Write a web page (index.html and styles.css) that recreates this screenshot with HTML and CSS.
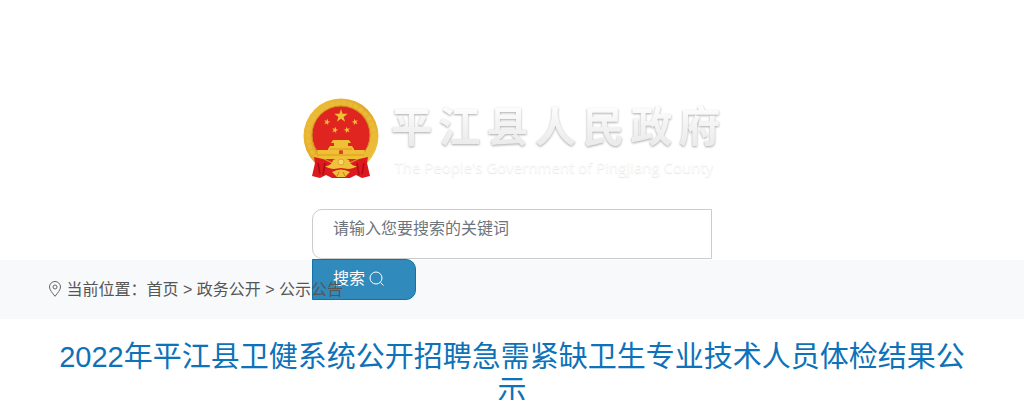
FILE: index.html
```html
<!DOCTYPE html>
<html lang="zh-CN">
<head>
<meta charset="utf-8">
<meta name="viewport" content="width=device-width, initial-scale=1">
<title>平江县人民政府</title>
<link rel="stylesheet" href="styles.css">
</head>
<body>
<header class="header">
  <a class="logo" href="#">
    <svg class="emblem" viewBox="0 0 76 82" aria-hidden="true">
      <defs>
        <linearGradient id="gold" x1="0" y1="0" x2="1" y2="1">
          <stop offset="0" stop-color="#f0c13c"/><stop offset=".5" stop-color="#e0a826"/><stop offset="1" stop-color="#f3cd48"/>
        </linearGradient>
        <path id="star" d="M0-7 1.6-2.2 6.7-2.2 2.6.9 4.1 5.7 0 2.7-4.1 5.7-2.6.9-6.7-2.2-1.6-2.2Z"/>
      </defs>
      <circle cx="38" cy="38" r="37.5" fill="url(#gold)"/>
      <circle cx="38" cy="38" r="33" fill="none" stroke="#ebba38" stroke-width="4" stroke-dasharray="5 1"/>
      <circle cx="38" cy="37" r="29" fill="#e02420" stroke="#cf9220" stroke-width="1"/>
      <g fill="#f0bf35">
        <use href="#star" transform="translate(38 18)"/>
        <use href="#star" transform="translate(24 24) scale(.48) rotate(15)"/>
        <use href="#star" transform="translate(52 24) scale(.48) rotate(-15)"/>
        <use href="#star" transform="translate(32 32) scale(.48) rotate(15)"/>
        <use href="#star" transform="translate(44 32) scale(.48) rotate(-15)"/>
        <path d="M30 42h16l2 3H28zM31 45h14v3H31zM27 48h22l2 3v6H25v-6zM14 52h48l-2 9H16z"/>
      </g>
      <path d="M15 57h46M27 51h22" stroke="#d99a20" stroke-width="1"/>
      <path d="M36 56v-3q2-2 4 0v3z" fill="#d8432a"/>
      <path d="M11 59l9 2 8 4h20l8-4 9-2-1 6 3 13-8 2-6-3-6 3H29l-6-3-6 3-8-2 3-13z" fill="#db191e"/>
      <path d="M15 65l2 11m5-11l-2 12m41-12l-2 11m-5-11l2 12" stroke="#a90c14" stroke-width="1.500" fill="none"/>
      <path d="M22 68c4 0 7-2 8-6 4-1 4-4 8-4s4 3 8 4c1 4 4 6 8 6-6 4-10 3-16 2-6 1-10 2-16-2z" fill="#f0c23b"/>
      <circle cx="38" cy="64" r="3" fill="#f7da67" stroke="#dca52b"/>
      <path d="M29 74q9-5 18 0l-5 5h-8z" fill="#f0c23b"/>
      <path d="M34 78l2-4m6 4l-2-4" stroke="#c88119"/>
    </svg>
    <span class="wordmark">
      <span class="name"><span>平</span><span>江</span><span>县</span><span>人</span><span>民</span><span>政</span><span>府</span></span>
      <span class="name-en">The People's Government of Pingjiang County</span>
    </span>
  </a>
  <form class="search">
    <input class="search-input" type="text" aria-label="搜索关键词" placeholder="请输入您要搜索的关键词">
    <button class="search-button" type="button">搜索
      <svg class="search-icon" viewBox="0 0 16 16" aria-hidden="true"><circle cx="7" cy="7" r="6"/><path d="M11.500 11.500l3 3"/></svg>
    </button>
  </form>
</header>
<nav class="breadcrumb" aria-label="当前位置">
  <svg class="pin" viewBox="0 0 14 16" aria-hidden="true"><path d="M7 15.300C4.500 12 1.500 9 1.500 6a5.500 5.500 0 0 1 11 0c0 3-3 6-5.500 9.300z"/><circle cx="7" cy="6" r="2"/></svg>
  当前位置：<a href="#">首页</a> &gt; <a href="#">政务公开</a> &gt; <a href="#">公示公告</a>
</nav>
<main class="article">
  <h1 class="title">2022年平江县卫健系统公开招聘急需紧缺卫生专业技术人员体检结果公示</h1>
</main>
</body>
</html>
```
FILE: styles.css
```css
* {
  box-sizing: border-box;
}

body {
  margin: 0;
  background: #fff;
  color: #555;
  font: 16px/24px "Liberation Sans", "Noto Sans CJK SC", sans-serif;
}

a {
  color: inherit;
  text-decoration: none;
}

.header {
  display: flex;
  flex-direction: column;
  align-items: center;
  padding-top: 98px;
}

.logo {
  display: flex;
  gap: 11px;
}

.emblem {
  width: 76px;
  height: 82px;
}

.wordmark {
  display: flex;
  flex-direction: column;
}

.name {
  display: flex;
  gap: 6px;
  font: bold 42px/52px "Noto Sans CJK SC", sans-serif;
  color: transparent;
  background: linear-gradient(#fff 10%, #f4f4f4 50%, #ebebeb 90%);
  background-clip: text;
  -webkit-background-clip: text;
  filter: drop-shadow(0 1px 1px #aaa);
}

.name-en {
  padding-left: 4px;
  font: 15px/34px "Open Sans", sans-serif;
  color: #fcfcfc;
  text-shadow: 0 1px 1px #e4e4e4;
}

/* The button hangs over the bar below the header. */
.search {
  display: flex;
  flex-direction: column;
  align-items: flex-start;
  width: 400px;
  max-width: 100%;
  margin-top: 25px;
  margin-bottom: -40px;
}

.search-input {
  width: 100%;
  height: 50px;
  padding: 0 20px 10px;
  border: 1px solid #ccc;
  border-radius: 10px 0 0 10px;
  background: #fff;
  color: #555;
  font: inherit;
}

.search-input::placeholder {
  color: #6c757d;
  opacity: 1;
}

.search-button {
  display: flex;
  align-items: center;
  gap: 4px;
  height: 41px;
  padding: 0 30px 2px 20px;
  border: 1px solid #1470a6;
  border-radius: 0 10px 10px 0;
  background: #318abc;
  color: #fff;
  font: inherit;
}

.search-icon {
  width: 16px;
  height: 16px;
  fill: none;
  stroke: #fff;
}

.breadcrumb {
  padding: 18px 48px 17px;
  background: #f7f9fb;
}

.pin {
  width: 14px;
  height: 16px;
  vertical-align: -2px;
  fill: none;
  stroke: #666;
}

.article {
  padding: 21px 48px;
}

.title {
  margin: 0;
  color: #0d72b9;
  font-size: 29px;
  font-weight: 400;
  line-height: 34px;
  text-align: center;
}
```
